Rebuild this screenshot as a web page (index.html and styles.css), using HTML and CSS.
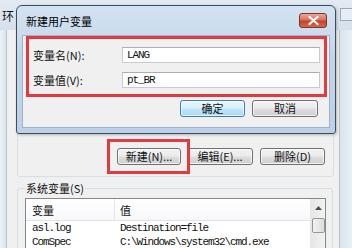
FILE: index.html
```html
<!DOCTYPE html>
<html>
<head>
<meta charset="utf-8">
<link rel="stylesheet" href="styles.css">
</head>
<body>
<div class="screen">
  <div class="bgwin">
    <div class="bg-title">
      <span class="bg-title-text">环</span>
      <span class="bg-close"></span>
    </div>
    <div class="bg-body">
      <div class="frame-l"></div>
      <div class="client">
        <div class="user-group">
          <div class="btn-row">
            <button class="btn btn-new">新建(N)...</button>
            <button class="btn btn-edit">编辑(E)...</button>
            <button class="btn btn-del">删除(D)</button>
          </div>
        </div>
        <fieldset class="sys-group">
          <legend class="legend">系统变量(S)</legend>
          <div class="list">
            <div class="list-main">
              <div class="list-head"><span class="col1">变量</span><span class="col2">值</span></div>
              <div class="list-row"><span class="col1 mono">asl.log</span><span class="col2 mono">Destination=file</span></div>
              <div class="list-row"><span class="col1 mono">ComSpec</span><span class="col2 mono">C:\Windows\system32\cmd.exe</span></div>
            </div>
            <div class="scrollbar">
              <div class="sb-up"><svg width="7" height="4" viewBox="0 0 7 4"><path d="M0 4 L3.5 0 L7 4 Z" fill="#4d4d4d"/></svg></div>
              <div class="sb-thumb"></div>
            </div>
          </div>
        </fieldset>
      </div>
      <div class="frame-r"></div>
    </div>
  </div>

  <div class="dialog">
    <div class="dlg-title">
      <span class="dlg-title-text">新建用户变量</span>
      <span class="dlg-close"><svg width="11" height="9" viewBox="0 0 11 9"><path d="M1.5 1 L9.5 8 M9.5 1 L1.5 8" stroke="#ffffff" stroke-width="2.2" stroke-linecap="round"/></svg></span>
    </div>
    <div class="dlg-client">
      <div class="mark-box">
        <div class="field-row">
          <label class="field-label">变量名(N):</label>
          <div class="field-input mono">LANG</div>
        </div>
        <div class="field-row">
          <label class="field-label">变量值(V):</label>
          <div class="field-input mono">pt_BR</div>
        </div>
      </div>
      <div class="dlg-btns">
        <button class="btn btn-ok">确定</button>
        <button class="btn btn-cancel">取消</button>
      </div>
    </div>
  </div>
</div>
</body>
</html>
```

FILE: styles.css
```css
* { box-sizing: border-box; }
html, body { margin: 0; padding: 0; }
body {
  width: 352px;
  height: 248px;
  overflow: hidden;
  background: #f0f0f0;
  font-family: "Noto Sans CJK SC", "Noto Sans", sans-serif;
  font-size: 11px;
  color: #111;
}
.screen {
  position: relative;
  width: 352px;
  height: 248px;
  overflow: hidden;
}
.mono {
  font-family: "Liberation Mono", "DejaVu Sans Mono", monospace;
  font-size: 11px;
  letter-spacing: -1.1px;
}

/* background window */
.bgwin {
  display: flex;
  flex-direction: column;
  width: 352px;
  height: 248px;
}
.bg-title {
  height: 30px;
  flex: 0 0 30px;
  display: flex;
  align-items: flex-start;
  background: linear-gradient(#e3eaf2, #d5e0ec);
}
.bg-title-text {
  margin: 8px 0 0 2px;
  font-size: 12px;
  line-height: 16px;
}
.bg-close {
  margin: 8px 0 0 auto;
  width: 12px;
  height: 13px;
  border: 1px solid #9aa9ba;
  border-right: none;
  background: #e6edf4;
}
.bg-body {
  flex: 1;
  display: flex;
  min-height: 0;
}
.frame-l {
  width: 7px;
  background: linear-gradient(90deg, #eef2f7, #d9e3ee);
  border-right: 1px solid #b4c2d1;
}
.frame-r {
  width: 13px;
  background: linear-gradient(90deg, #d9e3ee, #e9eff5);
  border-left: 1px solid #b4c2d1;
}
.client {
  flex: 1;
  background: #f0f0f0;
  display: flex;
  flex-direction: column;
  overflow: hidden;
}
.user-group {
  flex: 0 0 auto;
  margin: 8px 5px 0 10px;
  height: 139px;
  border: 1px solid #d5dfe5;
  border-radius: 3px;
  display: flex;
  flex-direction: column;
  justify-content: flex-end;
  padding: 0 8px 11px 0;
}
.btn-row {
  display: flex;
  justify-content: flex-end;
  gap: 6px;
}
.btn {
  height: 17px;
  padding: 0;
  border: 1px solid #707070;
  border-radius: 3px;
  background: linear-gradient(#f2f2f2 0%, #ebebeb 48%, #dddddd 52%, #cfcfcf 100%);
  font-family: "Noto Sans CJK SC", "Noto Sans", sans-serif;
  font-size: 11px;
  line-height: 15px;
  color: #111;
  text-align: center;
  box-shadow: inset 0 0 0 1px rgba(255,255,255,0.7);
}
.btn-new { width: 64px; position: relative; }
.btn-new::after {
  content: "";
  position: absolute;
  left: -11px;
  top: -10px;
  right: -10px;
  bottom: -10px;
  border: 3px solid #e23a3f;
}
.btn-edit { width: 66px; }
.btn-del { width: 65px; margin-left: 1px; }

.sys-group {
  flex: 0 0 auto;
  margin: 4px 6px 0 10px;
  padding: 0 6px 0 7px;
  border: 1px solid #d5dfe5;
  border-radius: 3px;
  min-width: 0;
}
.legend {
  padding: 0 1px;
  font-size: 11px;
  line-height: 14px;
}
.list {
  margin-top: 3px;
  display: flex;
  height: 60px;
  border: 1px solid #828790;
  background: #ffffff;
}
.list-main {
  flex: 1;
  min-width: 0;
}
.list-head {
  height: 22px;
  display: flex;
  align-items: center;
  border-bottom: 1px solid #e3e3e3;
  background: linear-gradient(#ffffff, #f7f8fa);
}
.list-head .col1 { border-right: 1px solid #e3e5e8; align-self: stretch; display: flex; align-items: center; }
.col1 {
  flex: 0 0 89px;
  padding-left: 6px;
  white-space: nowrap;
}
.col2 {
  padding-left: 5px;
  white-space: nowrap;
}
.list-row {
  height: 14px;
  display: flex;
  align-items: center;
  line-height: 14px;
}
.scrollbar {
  width: 15px;
  background: linear-gradient(90deg, #e6e6e6, #f3f3f3);
  border-left: 1px solid #e8e8e8;
  display: flex;
  flex-direction: column;
  align-items: center;
}
.sb-up {
  height: 17px;
  width: 100%;
  display: flex;
  align-items: center;
  justify-content: center;
}
.sb-thumb {
  margin-top: 2px;
  width: 13px;
  height: 15px;
  border: 1px solid #979797;
  border-radius: 2px;
  background: linear-gradient(90deg, #f2f2f2, #dedede);
}

/* dialog window (floats over the background window) */
.dialog {
  position: absolute;
  left: 16px;
  top: 5px;
  width: 320px;
  height: 129px;
  border: 1px solid #3b4d63;
  border-radius: 6px 6px 3px 3px;
  background: linear-gradient(#d4e3f2 0%, #c2d6ea 40%, #bcd1e7 100%);
  display: flex;
  flex-direction: column;
  box-shadow: 1px 1px 3px rgba(0,0,0,0.25);
}
.dlg-title {
  height: 29px;
  flex: 0 0 29px;
  display: flex;
  align-items: center;
  padding: 0 8px 0 9px;
}
.dlg-title-text {
  font-size: 11px;
  line-height: 16px;
  color: #000;
}
.dlg-close {
  margin-left: auto;
  width: 28px;
  height: 15px;
  border: 1px solid #7b3529;
  border-radius: 3px;
  background: linear-gradient(#e9a99a 0%, #d9735f 45%, #c4432c 55%, #d46a4e 100%);
  display: flex;
  align-items: center;
  justify-content: center;
}
.dlg-client {
  flex: 1;
  margin: 0 5px 5px 5px;
  border: 1px solid #9fb3c8;
  background: #f0f0f0;
  display: flex;
  flex-direction: column;
}
.mark-box {
  margin: 0 2px 0 3px;
  height: 61px;
  border: 3px solid #e23a3f;
  padding: 8px 4px 0 0;
  display: flex;
  flex-direction: column;
  gap: 9px;
}
.field-row {
  display: flex;
  align-items: center;
  height: 16px;
}
.field-label {
  flex: 0 0 93px;
  padding-left: 4px;
  font-size: 11px;
  white-space: nowrap;
}
.field-input {
  flex: 1;
  height: 16px;
  border: 1px solid #c5cbd2;
  border-top-color: #abadb3;
  background: #ffffff;
  padding-left: 4px;
  line-height: 14px;
}
.dlg-btns {
  display: flex;
  justify-content: flex-end;
  gap: 7px;
  margin-top: 3px;
  padding-right: 11px;
}
.btn-ok {
  width: 65px;
  border-color: #3c7fb1;
  background: linear-gradient(#eaf6fd 0%, #d9f0fc 48%, #bee6fd 52%, #a7d9f5 100%);
}
.btn-cancel { width: 66px; }
```
